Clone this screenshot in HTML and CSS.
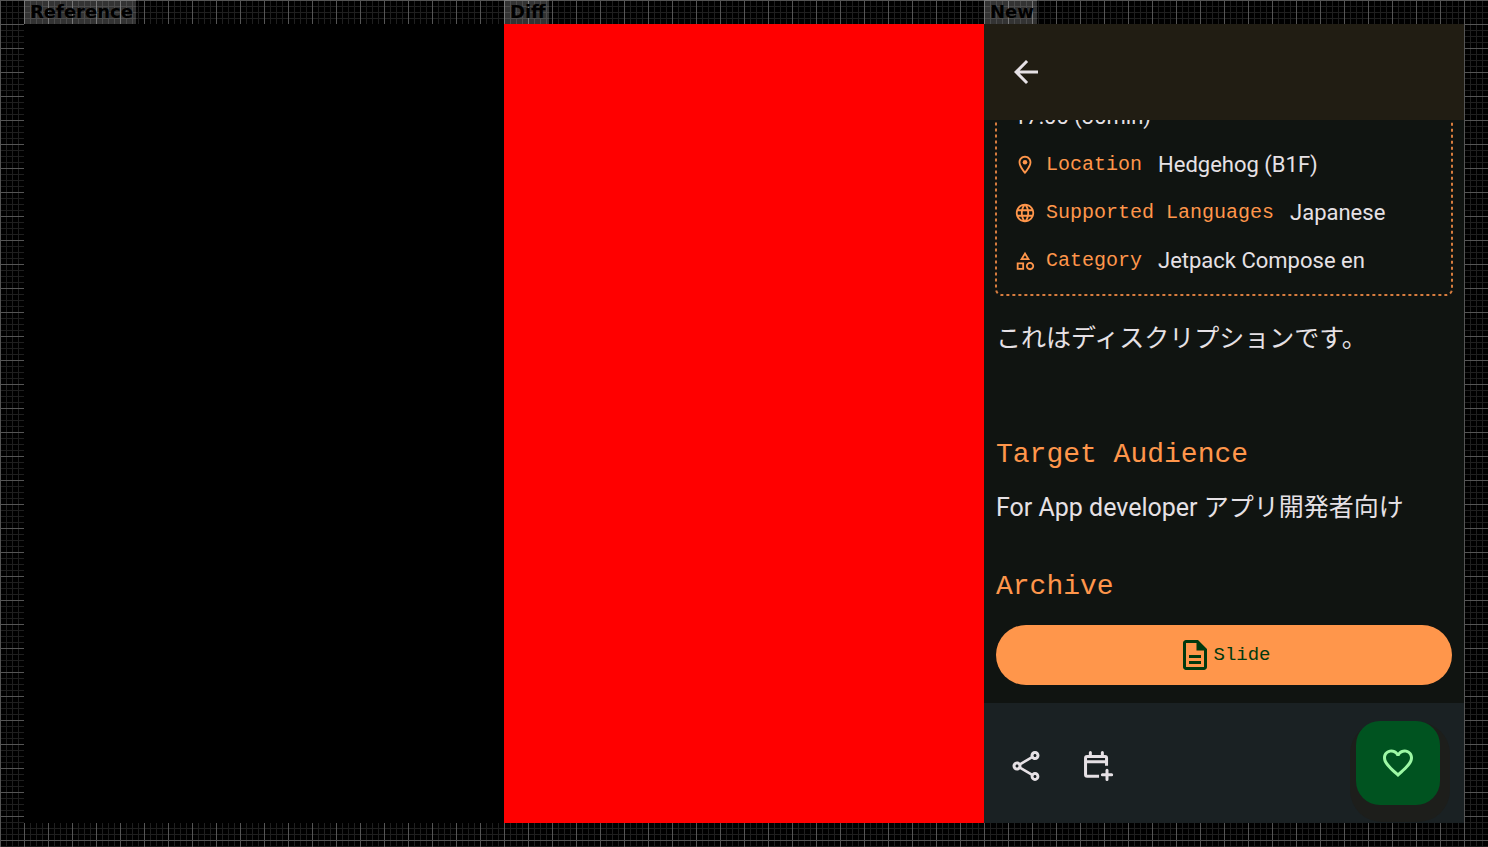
FILE: index.html
```
<!DOCTYPE html>
<html lang="en">
<head>
<meta charset="utf-8">
<title>Session detail comparison</title>
<link rel="stylesheet" href="styles.css">
</head>
<body>
<main class="board">
  <section class="panel">
    <h2 class="tag">Reference</h2>
    <div class="shot shot-reference"></div>
  </section>
  <section class="panel">
    <h2 class="tag">Diff</h2>
    <div class="shot shot-diff"></div>
  </section>
  <section class="panel">
    <h2 class="tag">New</h2>
    <div class="shot phone">
      <header class="top-bar">
        <button class="icon-button" type="button" aria-label="Back">
          <svg class="icon" viewBox="0 0 24 24"><path d="M20 11H7.830l5.590-5.590L12 4l-8 8 8 8 1.410-1.410L7.830 13H20z"/></svg>
        </button>
      </header>
      <div class="content">
        <div class="card">
          <svg class="card-outline" aria-hidden="true"><rect width="100%" height="100%" rx="6"/></svg>
          <p class="row"><span class="value">17:00 (30min)</span></p>
          <p class="row">
            <svg class="row-icon" viewBox="0 0 24 24"><path d="M12 2C8.130 2 5 5.130 5 9c0 5.250 7 13 7 13s7-7.750 7-13c0-3.870-3.130-7-7-7zM7 9c0-2.760 2.240-5 5-5s5 2.240 5 5c0 2.880-2.880 7.190-5 9.880C9.920 16.210 7 11.850 7 9z"/><circle cx="12" cy="9" r="2.500"/></svg>
            <span class="label">Location</span><span class="value">Hedgehog (B1F)</span>
          </p>
          <p class="row">
            <svg class="row-icon" viewBox="0 0 24 24"><path d="M11.990 2C6.470 2 2 6.480 2 12s4.470 10 9.990 10C17.520 22 22 17.520 22 12S17.520 2 11.990 2zm6.930 6h-2.950c-.32-1.250-.78-2.450-1.380-3.560 1.840.63 3.370 1.910 4.330 3.560zM12 4.040c.83 1.200 1.480 2.530 1.910 3.960h-3.820c.43-1.430 1.080-2.760 1.910-3.960zM4.260 14C4.100 13.360 4 12.690 4 12s.1-1.360.26-2h3.380c-.08.66-.14 1.320-.14 2s.06 1.340.14 2H4.260zm.82 2h2.950c.32 1.250.78 2.450 1.380 3.560-1.840-.63-3.370-1.900-4.330-3.560zm2.950-8H5.080c.96-1.660 2.490-2.930 4.330-3.560C8.810 5.550 8.350 6.750 8.030 8zM12 19.960c-.83-1.200-1.480-2.530-1.910-3.960h3.820c-.43 1.430-1.080 2.760-1.910 3.960zM14.340 14H9.660c-.09-.66-.16-1.320-.16-2s.07-1.350.16-2h4.680c.09.65.16 1.320.16 2s-.07 1.340-.16 2zm.25 5.560c.6-1.110 1.060-2.310 1.380-3.560h2.950c-.96 1.650-2.490 2.930-4.330 3.560zM16.360 14c.08-.66.14-1.320.14-2s-.06-1.340-.14-2h3.380c.16.64.26 1.310.26 2s-.1 1.360-.26 2h-3.380z"/></svg>
            <span class="label">Supported Languages</span><span class="value">Japanese</span>
          </p>
          <p class="row">
            <svg class="row-icon" viewBox="0 0 24 24"><path d="M12 2l-5.500 9h11L12 2zm0 3.840L13.930 9h-3.870L12 5.840zM17.500 13c-2.490 0-4.500 2.010-4.500 4.500s2.010 4.500 4.500 4.500 4.500-2.010 4.500-4.500-2.010-4.500-4.500-4.500zm0 7c-1.380 0-2.500-1.120-2.500-2.500s1.120-2.500 2.500-2.500 2.500 1.120 2.500 2.500-1.120 2.500-2.500 2.500zM3 21.500h8v-8H3v8zm2-6h4v4H5v-4z"/></svg>
            <span class="label">Category</span><span class="value">Jetpack Compose en</span>
          </p>
        </div>
        <p class="text description" lang="ja">これはディスクリプションです。</p>
        <section class="audience">
          <h3 class="heading">Target Audience</h3>
          <p class="text">For App developer <span lang="ja">アプリ開発者向け</span></p>
        </section>
        <section class="archive">
          <h3 class="heading">Archive</h3>
          <button class="slide-button" type="button">
            <svg class="icon" viewBox="0 0 24 24"><path d="M14 2H6c-1.100 0-2 .9-2 2v16c0 1.100.9 2 2 2h12c1.100 0 2-.9 2-2V8l-6-6zM6 20V4h7v5h5v11H6zM8 12h8v2H8zM8 16h8v2H8z"/></svg>Slide
          </button>
        </section>
      </div>
      <footer class="bottom-bar">
        <div class="actions">
          <button class="icon-button" type="button" aria-label="Share">
            <svg class="icon" viewBox="0 0 24 24"><path d="M18 16.080c-.76 0-1.440.3-1.960.77L8.910 12.700c.05-.23.09-.46.09-.7s-.04-.47-.09-.7l7.050-4.110c.54.5 1.250.81 2.040.81 1.660 0 3-1.340 3-3s-1.340-3-3-3-3 1.340-3 3c0 .24.04.47.09.7L8.040 9.810C7.500 9.310 6.790 9 6 9c-1.660 0-3 1.340-3 3s1.340 3 3 3c.79 0 1.500-.31 2.040-.81l7.120 4.160c-.05.21-.08.43-.08.65 0 1.610 1.310 2.920 2.920 2.920s2.920-1.310 2.920-2.920-1.310-2.920-2.920-2.920zM18 4c.55 0 1 .45 1 1s-.45 1-1 1-1-.45-1-1 .45-1 1-1zM6 13c-.55 0-1-.45-1-1s.45-1 1-1 1 .45 1 1-.45 1-1 1zm12 7.020c-.55 0-1-.45-1-1s.45-1 1-1 1 .45 1 1-.45 1-1 1z"/></svg>
          </button>
          <button class="icon-button" type="button" aria-label="Add to calendar">
            <svg class="icon icon-line" viewBox="0 0 24 24"><path d="M12.700 18.800H4.700q-1 0-1-1V6.600q0-1 1-1h12q1 0 1 1v5.200M3.700 9.200h14"/><path d="M6.900 5V3M14.900 5V3M18 14.800v6.200M14.900 17.900h6.200" stroke-linecap="round"/></svg>
          </button>
        </div>
        <button class="fab" type="button" aria-label="Add to favorites">
          <svg class="icon" viewBox="0 0 24 24"><path d="M16.500 3c-1.740 0-3.410.81-4.500 2.090C10.910 3.810 9.240 3 7.500 3 4.420 3 2 5.420 2 8.500c0 3.780 3.400 6.860 8.550 11.540L12 21.350l1.450-1.320C18.600 15.360 22 12.280 22 8.500 22 5.420 19.580 3 16.500 3zm-4.400 15.550l-.1.100-.1-.1C7.140 14.240 4 11.390 4 8.500 4 6.500 5.500 5 7.500 5c1.540 0 3.040.99 3.570 2.360h1.870C13.460 5.990 14.960 5 16.500 5c2 0 3.500 1.500 3.500 3.500 0 2.890-3.140 5.740-7.900 10.050z"/></svg>
        </button>
      </footer>
    </div>
  </section>
</main>
</body>
</html>
```
FILE: styles.css
```
* {
  box-sizing: border-box;
}

body {
  margin: 0;
  background-color: #000;
  background-image:
    linear-gradient(to right, #555 1px, transparent 1px),
    linear-gradient(to bottom, #555 1px, transparent 1px),
    linear-gradient(to right, #1f1f1f 1px, transparent 1px),
    linear-gradient(to bottom, #1f1f1f 1px, transparent 1px);
  background-size: 24px 24px, 24px 24px, 6px 6px, 6px 6px;
}

h2, h3, p {
  margin: 0;
  font-weight: 400;
}

button {
  padding: 0;
  border: 0;
  background: none;
  color: inherit;
  cursor: pointer;
}

.board {
  display: grid;
  grid-template-columns: repeat(3, 1fr);
  min-height: 100vh;
  padding: 0 24px 24px;
}

.panel {
  display: flex;
  flex-direction: column;
  align-items: flex-start;
}

.tag {
  height: 24px;
  padding: 0 3px 0 6px;
  background: rgba(255, 255, 255, 0.2);
  color: #000;
  font: 700 18px/24px "DejaVu Sans", sans-serif;
}

.shot {
  flex: 1;
  width: 100%;
}

.shot-reference {
  background: #000;
}

.shot-diff {
  background: #f00;
}

.phone {
  display: flex;
  flex-direction: column;
  overflow: hidden;
  background: #101411;
  color: #e6e1e5;
  font-family: Roboto, "Noto Sans CJK JP", sans-serif;
}

.top-bar {
  display: flex;
  align-items: center;
  height: 96px;
  padding: 0 6px;
  background: #211d13;
}

.icon-button {
  display: grid;
  place-items: center;
  width: 72px;
  height: 72px;
}

.icon {
  width: 36px;
  height: 36px;
  fill: currentColor;
}

.icon-line {
  fill: none;
  stroke: currentColor;
  stroke-width: 2;
}

.content {
  flex: 1 1 0;
  min-height: 0;
  display: flex;
  flex-direction: column;
  justify-content: flex-end;
  overflow: hidden;
  padding: 0 12px 18px;
}

.card {
  position: relative;
  display: flex;
  flex-direction: column;
  gap: 18px;
  padding: 18px 18px 19px;
}

.card-outline {
  position: absolute;
  inset: 0;
  width: 100%;
  height: 100%;
  overflow: visible;
  fill: none;
  stroke: #d67c3e;
  stroke-width: 2;
  stroke-dasharray: 3 3;
}

.row {
  display: flex;
  align-items: center;
  height: 30px;
}

.row-icon {
  width: 22px;
  height: 22px;
  margin-right: 10px;
  fill: #ff964b;
}

.label {
  margin-right: 16px;
  color: #ff964b;
  font: 20px/30px "Liberation Mono", monospace;
}

.value {
  font-size: 22px;
  line-height: 30px;
}

.text {
  font-size: 25px;
  line-height: 36px;
}

.description {
  margin: 26px 0 77px;
}

.heading {
  color: #ff964b;
  font: 28px/42px "Liberation Mono", monospace;
}

.audience {
  display: flex;
  flex-direction: column;
  gap: 14px;
  margin-bottom: 40px;
}

.archive {
  display: flex;
  flex-direction: column;
  gap: 17px;
}

.slide-button {
  display: flex;
  align-items: center;
  justify-content: center;
  height: 60px;
  border-radius: 30px;
  background: #ff964b;
  color: #00390f;
  font: 19px/30px "Liberation Mono", monospace;
}

.bottom-bar {
  display: flex;
  align-items: flex-start;
  justify-content: space-between;
  height: 120px;
  padding: 18px 24px 0 6px;
  background: #1a2123;
}

.actions {
  display: flex;
  padding-top: 9px;
}

.fab {
  display: grid;
  place-items: center;
  width: 84px;
  height: 84px;
  border-radius: 24px;
  background: #005320;
  box-shadow: 2px 9px 0 8px #1d1e1b;
  color: #9df8a5;
}
```
